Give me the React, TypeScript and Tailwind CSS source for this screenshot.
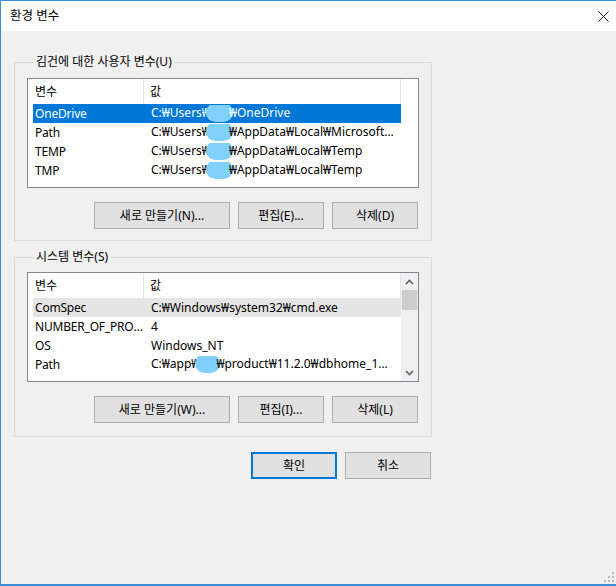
import React from "react"

type Row = { name: string; value: React.ReactNode }

function Blob({ w = 27 }: { w?: number }) {
  return (
    <span
      className="inline-block h-[19px] rounded-[10px] bg-[#7fd0fb] align-middle -mx-[4px] -mt-[2px]"
      style={{ width: w }}
    />
  )
}

const userVars: Row[] = [
  { name: "OneDrive", value: <>C:₩Users₩<Blob />₩OneDrive</> },
  { name: "Path", value: <>C:₩Users₩<Blob />₩AppData₩Local₩Microsoft₩WindowsApps;</> },
  { name: "TEMP", value: <>C:₩Users₩<Blob />₩AppData₩Local₩Temp</> },
  { name: "TMP", value: <>C:₩Users₩<Blob />₩AppData₩Local₩Temp</> },
]

const sysVars: Row[] = [
  { name: "ComSpec", value: "C:₩Windows₩system32₩cmd.exe" },
  { name: "NUMBER_OF_PROCESSORS", value: "4" },
  { name: "OS", value: "Windows_NT" },
  { name: "Path", value: <>C:₩app₩<Blob w={25} />₩product₩11.2.0₩dbhome_1₩bin;C:₩Windows</> },
]

function Chevron({ up }: { up?: boolean }) {
  return (
    <svg width="9" height="6" viewBox="0 0 9 6" className="block">
      <path
        d={up ? "M1 5 L4.5 1.5 L8 5" : "M1 1 L4.5 4.5 L8 1"}
        fill="none"
        stroke="#606060"
        strokeWidth="1.6"
      />
    </svg>
  )
}

function VarList({ rows, selected, focused, scroll }: { rows: Row[]; selected: number; focused?: boolean; scroll?: boolean }) {
  return (
    <div className="flex h-[110px] border border-[#828790] bg-white">
      <div className="ml-[5px] w-[368px]">
        <div className="flex h-[25px] items-center">
          <div className="flex h-full w-[111px] items-center border-r border-[#e5e5e5] pl-[2px]">변수</div>
          <div className="flex h-full flex-1 items-center border-r border-[#e5e5e5] pl-[6px]">값</div>
        </div>
        {rows.map((r, i) => {
          const sel = i === selected
          const cls = sel ? (focused ? "bg-[#0078d7] text-white" : "bg-[#e5e5e5]") : ""
          return (
            <div key={i} className={"flex h-[19px] items-center " + cls}>
              <div className="w-[111px] truncate pl-[2px] tracking-[-0.2px]">{r.name}</div>
              <div className={"min-w-0 flex-1 truncate pl-[7px] " + (scroll ? "pr-[7px]" : "pr-[3px]")}>{r.value}</div>
            </div>
          )
        })}
      </div>
      {scroll && (
        <div className="ml-auto flex w-[17px] flex-col bg-[#f0f0f0]">
          <div className="flex h-[17px] items-center justify-center">
            <Chevron up />
          </div>
          <div className="mx-[1px] h-[20px] bg-[#cdcdcd]" />
          <div className="flex-1" />
          <div className="flex h-[17px] items-center justify-center">
            <Chevron />
          </div>
        </div>
      )}
    </div>
  )
}

function Btn({ children, w = 86, primary }: { children: React.ReactNode; w?: number; primary?: boolean }) {
  return (
    <button
      className={
        "flex h-[27px] items-center justify-center bg-[#e1e1e1] " +
        (primary ? "border-2 border-[#0078d7]" : "border border-[#adadad]")
      }
      style={{ width: w }}
    >
      {children}
    </button>
  )
}

function Group({ label, children, className }: { label: string; children: React.ReactNode; className: string }) {
  return (
    <fieldset className={"ml-[13px] w-[418px] border border-[#dcdcdc] px-[12px] " + className}>
      <legend className="ml-[7px] px-[2px] leading-[16px]">{label}</legend>
      {children}
    </fieldset>
  )
}

export default function App() {
  return (
    <div className="relative flex h-[586px] w-[616px] flex-col border-b-2 border-l border-t border-[#3b8ed4] bg-[#f0f0f0] font-['Noto_Sans','Noto_Sans_CJK_KR',sans-serif] text-[12px] leading-[16px] text-black">
      <div className="flex h-[30px] shrink-0 items-center justify-between bg-white pl-[9px] pr-[7px]">
        <span className="text-[12.5px]">환경 변수</span>
        <svg width="11" height="11" viewBox="0 0 11 11">
          <path d="M0.5 0.5 L10.5 10.5 M10.5 0.5 L0.5 10.5" stroke="#111" strokeWidth="1" />
        </svg>
      </div>

      <Group label="김건에 대한 사용자 변수(U)" className="mt-[23px] pt-[8px] pb-[11px]">
        <VarList rows={userVars} selected={0} focused />
        <div className="mr-[1px] mt-[14px] flex justify-end gap-[8px]">
          <Btn w={136}>새로 만들기(N)...</Btn>
          <Btn>편집(E)...</Btn>
          <Btn>삭제(D)</Btn>
        </div>
      </Group>

      <Group label="시스템 변수(S)" className="mt-[8px] pt-[7px] pb-[13px]">
        <VarList rows={sysVars} selected={0} scroll />
        <div className="mr-[1px] mt-[14px] flex justify-end gap-[8px]">
          <Btn w={136}>새로 만들기(W)...</Btn>
          <Btn>편집(I)...</Btn>
          <Btn>삭제(L)</Btn>
        </div>
      </Group>

      <div className="mt-[15px] flex w-[430px] justify-end gap-[8px]">
        <Btn primary>확인</Btn>
        <Btn>취소</Btn>
      </div>

      <svg width="12" height="12" viewBox="0 0 12 12" className="absolute bottom-[1px] right-[1px]">
        <g fill="#b8b8b8">
          <rect x="9" y="1" width="2" height="2" />
          <rect x="5" y="5" width="2" height="2" />
          <rect x="9" y="5" width="2" height="2" />
          <rect x="1" y="9" width="2" height="2" />
          <rect x="5" y="9" width="2" height="2" />
          <rect x="9" y="9" width="2" height="2" />
        </g>
      </svg>
    </div>
  )
}
